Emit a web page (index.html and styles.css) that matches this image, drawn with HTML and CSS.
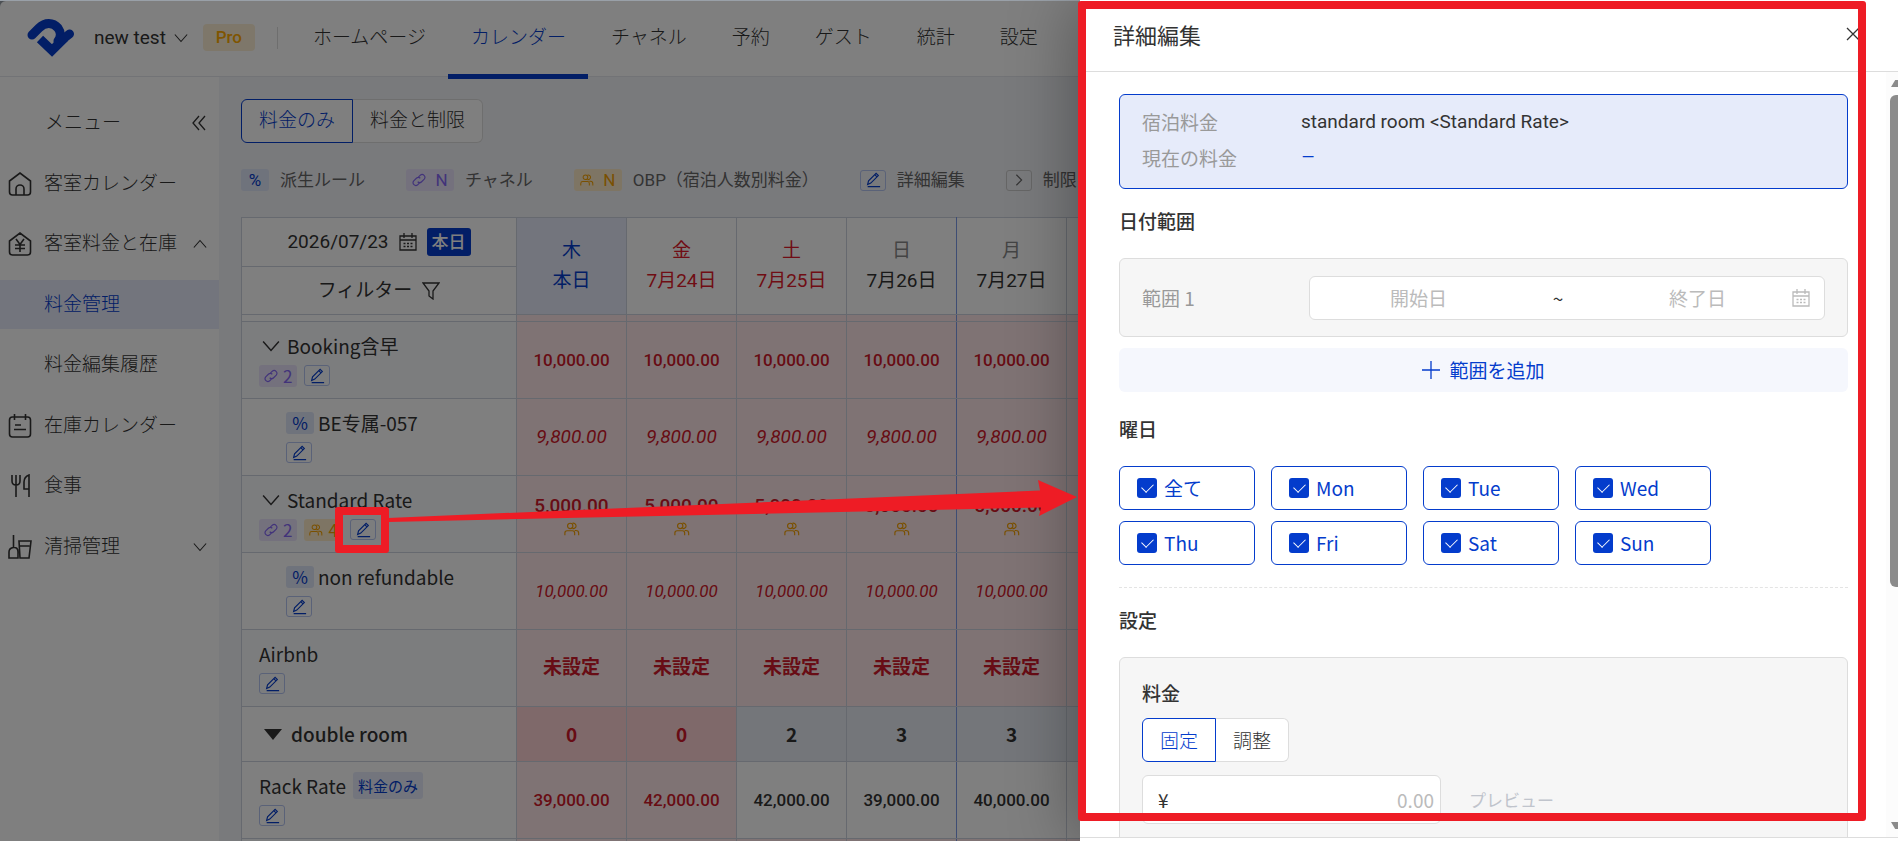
FILE: index.html
```html
<!DOCTYPE html>
<html lang="ja">
	<head>
		<meta charset="utf-8" />
		<title>料金管理</title>
		<link rel="stylesheet" href="styles.css">
	</head>
	<body>
		<svg class="sprite" aria-hidden="true">
			<symbol id="i-down" viewBox="0 0 16 16"><path d="M1 4l7 8 7-8"/></symbol>
			<symbol id="i-up" viewBox="0 0 16 16"><path d="M1 12l7-8 7 8"/></symbol>
			<symbol id="i-right" viewBox="0 0 16 16"><path d="M5 2l6 6-6 6"/></symbol>
			<symbol id="i-link" viewBox="0 0 16 16"><path d="M7 5l2.500-2.500a3.200 3.200 0 0 1 4.500 4.500L11 10a3.200 3.200 0 0 1-4.500 0M9 11l-2.500 2.500A3.200 3.200 0 0 1 2 9l3-3a3.200 3.200 0 0 1 4.500 0"/></symbol>
			<symbol id="i-people" viewBox="0 0 18 16"><circle cx="7" cy="4.500" r="3"/><path d="M9.500 1.700a3 3 0 1 1 0 5.600M1 15v-2.500Q1 10 3.500 10h6q2.500 0 2.500 2.500V15M12 9.700h1.500q3 0 3 3V15"/></symbol>
			<symbol id="i-edit" viewBox="0 0 18 18"><path d="M3 14l1-4L12.500 1.500l2.500 2.500L6.500 12.500zM11 3l2.500 2.500M3 16.500h14"/></symbol>
			<symbol id="i-calendar" viewBox="0 0 18 18"><path d="M1 3h16v14H1zM1 7h16M5 0v5M13 0v5M4.500 10.500h2M8 10.500h2M11.500 10.500h2M4.500 13.500h2M8 13.500h2M11.500 13.500h2"/></symbol>
			<symbol id="i-house" viewBox="0 0 24 24"><path d="M1.500 20V9L12 1l10.500 8v11q0 3-3 3h-15q-3 0-3-3zM8 23v-6a4 4 0 0 1 8 0v6"/></symbol>
			<symbol id="i-price" viewBox="0 0 24 24"><path d="M1.500 20V9L12 1l10.500 8v11q0 3-3 3h-15q-3 0-3-3zM8 7l4 5.500L16 7M12 12.500V20M7 13h10M7 16.500h10"/></symbol>
			<symbol id="i-stock" viewBox="0 0 24 24"><rect x="1.500" y="3" width="21" height="20" rx="3"/><path d="M6.500 0v6M17.500 0v6M7 11h6M6 15.500h12"/></symbol>
			<symbol id="i-meal" viewBox="0 0 24 24"><path d="M4 1v6q0 4 4 4t4-4V1M8 1v22M21 23V1q-5 2-5 7v7h5"/></symbol>
			<symbol id="i-clean" viewBox="0 0 24 24"><path d="M5.500 0v12M1 23V17q0-4 4.500-4.500T10 17v6zM11 6h12l-2 17h-9zM11.500 11h10"/></symbol>
		</svg>

		<div class="app">
			<header class="topbar">
				<svg class="logo" viewBox="0 0 47 38"><g fill="none" stroke="#043ccc" stroke-width="9"><path d="M5 16L12 9C18 3 26 3 31 9C34 13 34 18 31 22" stroke-linecap="round"/><path d="M13 20L25 31.500L38 18.500"/><path d="M36 20L42.500 15" stroke-linecap="round"/></g></svg>
				<button class="account">new test <svg class="icon icon14"><use href="#i-down"/></svg></button>
				<span class="plan">Pro</span>
				<span class="divider"></span>
				<nav class="nav">
					<a href="#">ホームページ</a>
					<a href="#" class="active">カレンダー</a>
					<a href="#">チャネル</a>
					<a href="#">予約</a>
					<a href="#">ゲスト</a>
					<a href="#">統計</a>
					<a href="#">設定</a>
				</nav>
			</header>

			<div class="main">
				<aside class="sidebar">
					<div class="menu_title"><span>メニュー</span><svg class="icon icon16" viewBox="0 0 16 16"><path d="M8 1L2 8l6 7M14 1L8 8l6 7"/></svg></div>
					<nav class="menu">
						<a href="#"><svg class="icon icon24"><use href="#i-house"/></svg><span>客室カレンダー</span></a>
						<a href="#"><svg class="icon icon24"><use href="#i-price"/></svg><span>客室料金と在庫</span><svg class="icon icon14 arrow"><use href="#i-up"/></svg></a>
						<a href="#" class="sub active"><span>料金管理</span></a>
						<a href="#" class="sub"><span>料金編集履歴</span></a>
						<a href="#"><svg class="icon icon24"><use href="#i-stock"/></svg><span>在庫カレンダー</span></a>
						<a href="#"><svg class="icon icon24"><use href="#i-meal"/></svg><span>食事</span></a>
						<a href="#"><svg class="icon icon24"><use href="#i-clean"/></svg><span>清掃管理</span><svg class="icon icon14 arrow"><use href="#i-down"/></svg></a>
					</nav>
				</aside>

				<main class="content">
					<div class="segment">
						<button class="selected">料金のみ</button><button>料金と制限</button>
					</div>

					<div class="legend">
						<div><span class="tag blue">%</span>派生ルール</div>
						<div><span class="tag violet wide"><svg class="icon icon14"><use href="#i-link"/></svg>N</span>チャネル</div>
						<div><span class="tag orange wide"><svg class="icon icon14"><use href="#i-people"/></svg>N</span>OBP（宿泊人数別料金）</div>
						<div><span class="edit"><svg class="icon icon16"><use href="#i-edit"/></svg></span>詳細編集</div>
						<div><span class="edit grey"><svg class="icon icon14"><use href="#i-right"/></svg></span>制限を編集</div>
					</div>

					<table class="rates">
						<colgroup><col class="c_name"><col span="6" class="c_day"></colgroup>
						<thead>
							<tr class="h_date">
								<th><div class="tools"><span>2026/07/23</span><svg class="icon icon18"><use href="#i-calendar"/></svg><button class="today_button">本日</button></div></th>
								<th rowspan="2" class="today">木<br>本日</th>
								<th rowspan="2" class="red">金<br>7月24日</th>
								<th rowspan="2" class="red">土<br>7月25日</th>
								<th rowspan="2" class="week_end"><span class="dow">日</span><br>7月26日</th>
								<th rowspan="2"><span class="dow">月</span><br>7月27日</th>
								<th rowspan="2"></th>
							</tr>
							<tr class="h_filter">
								<th><div class="tools"><span>フィルター</span><svg class="icon icon18" viewBox="0 0 18 18"><path d="M1 1h16l-6 8v8l-4-3V9z"/></svg></div></th>
							</tr>
						</thead>
						<tbody>
							<tr class="stub"><td></td><td></td><td></td><td></td><td class="week_end"></td><td></td><td></td></tr>
							<tr class="parent small">
								<td><div class="name"><div class="line"><svg class="icon icon18 toggle"><use href="#i-down"/></svg>Booking含早</div><div class="line"><span class="tag violet"><svg class="icon icon14"><use href="#i-link"/></svg>2</span><button class="edit" aria-label="詳細編集"><svg class="icon icon16"><use href="#i-edit"/></svg></button></div></div></td>
								<td>10,000.00</td><td>10,000.00</td><td>10,000.00</td><td class="week_end">10,000.00</td><td>10,000.00</td><td></td>
							</tr>
							<tr class="child">
								<td><div class="name"><div class="line"><span class="tag blue">%</span>BE专属-057</div><div class="line"><button class="edit" aria-label="詳細編集"><svg class="icon icon16"><use href="#i-edit"/></svg></button></div></div></td>
								<td>9,800.00</td><td>9,800.00</td><td>9,800.00</td><td class="week_end">9,800.00</td><td>9,800.00</td><td></td>
							</tr>
							<tr class="parent">
								<td><div class="name"><div class="line"><svg class="icon icon18 toggle"><use href="#i-down"/></svg>Standard Rate</div><div class="line"><span class="tag violet"><svg class="icon icon14"><use href="#i-link"/></svg>2</span><span class="tag orange"><svg class="icon icon14"><use href="#i-people"/></svg>4</span><button class="edit" aria-label="詳細編集"><svg class="icon icon16"><use href="#i-edit"/></svg></button></div></div></td>
								<td>5,000.00<svg class="icon icon16 obp"><use href="#i-people"/></svg></td>
								<td>5,000.00<svg class="icon icon16 obp"><use href="#i-people"/></svg></td>
								<td>5,000.00<svg class="icon icon16 obp"><use href="#i-people"/></svg></td>
								<td class="week_end">5,000.00<svg class="icon icon16 obp"><use href="#i-people"/></svg></td>
								<td>5,000.00<svg class="icon icon16 obp"><use href="#i-people"/></svg></td>
								<td></td>
							</tr>
							<tr class="child small">
								<td><div class="name"><div class="line"><span class="tag blue">%</span>non refundable</div><div class="line"><button class="edit" aria-label="詳細編集"><svg class="icon icon16"><use href="#i-edit"/></svg></button></div></div></td>
								<td>10,000.00</td><td>10,000.00</td><td>10,000.00</td><td class="week_end">10,000.00</td><td>10,000.00</td><td></td>
							</tr>
							<tr class="parent unset">
								<td><div class="name"><div class="line">Airbnb</div><div class="line"><button class="edit" aria-label="詳細編集"><svg class="icon icon16"><use href="#i-edit"/></svg></button></div></div></td>
								<td>未設定</td><td>未設定</td><td>未設定</td><td class="week_end">未設定</td><td>未設定</td><td></td>
							</tr>
							<tr class="room">
								<td><div class="line"><span class="triangle"></span>double room</div></td>
								<td class="none">0</td><td class="none">0</td><td>2</td><td class="week_end">3</td><td>3</td><td></td>
							</tr>
							<tr class="rack small">
								<td><div class="name"><div class="line">Rack Rate<span class="only">料金のみ</span></div><div class="line"><button class="edit" aria-label="詳細編集"><svg class="icon icon16"><use href="#i-edit"/></svg></button></div></div></td>
								<td class="out">39,000.00</td><td class="out">42,000.00</td><td>42,000.00</td><td class="week_end">39,000.00</td><td>40,000.00</td><td></td>
							</tr>
							<tr class="parent"><td></td><td></td><td></td><td></td><td class="week_end"></td><td></td><td></td></tr>
						</tbody>
					</table>
				</main>
			</div>
		</div>

		<div class="mask"></div>

		<section class="drawer">
			<header class="drawer_header">
				<h1>詳細編集</h1>
				<button class="close" aria-label="閉じる"><svg class="icon icon14" viewBox="0 0 14 14"><path d="M1 1l12 12M13 1L1 13"/></svg></button>
			</header>

			<div class="drawer_body">
				<form class="form">
					<dl class="summary">
						<dt>宿泊料金</dt><dd>standard room &lt;Standard Rate&gt;</dd>
						<dt>現在の料金</dt><dd class="current">–</dd>
					</dl>

					<h2>日付範囲</h2>
					<div class="range">
						<label for="date_from">範囲 1</label>
						<div class="dates">
							<input id="date_from" type="text" placeholder="開始日">
							<span>~</span>
							<input type="text" placeholder="終了日" aria-label="終了日">
							<svg class="icon icon18"><use href="#i-calendar"/></svg>
						</div>
					</div>
					<button type="button" class="add"><svg class="icon icon18" viewBox="0 0 18 18"><path d="M9 0v18M0 9h18"/></svg>範囲を追加</button>

					<h2>曜日</h2>
					<div class="days">
						<label><input type="checkbox" checked>全て</label>
						<label><input type="checkbox" checked>Mon</label>
						<label><input type="checkbox" checked>Tue</label>
						<label><input type="checkbox" checked>Wed</label>
						<label><input type="checkbox" checked>Thu</label>
						<label><input type="checkbox" checked>Fri</label>
						<label><input type="checkbox" checked>Sat</label>
						<label><input type="checkbox" checked>Sun</label>
					</div>

					<h2>設定</h2>
					<div class="settings">
						<h3>料金</h3>
						<div class="segment">
							<button type="button" class="selected">固定</button><button type="button">調整</button>
						</div>
						<div class="price_row">
							<div class="price"><label for="price">¥</label><input id="price" type="text" placeholder="0.00"></div>
							<span class="preview">プレビュー</span>
						</div>
					</div>
				</form>
				<div class="scrollbar"><span class="scroll_up"></span><span class="thumb"></span><span class="scroll_down"></span></div>
			</div>
			<footer class="drawer_footer"></footer>
			<div class="mark mark_drawer"></div>
		</section>

		<!-- red callout from the pencil button to the drawer -->
		<div class="mark mark_edit"></div>
		<svg class="mark_arrow" viewBox="0 0 690 48"><path d="M0 42L652 14.500 650 4 689 21 651 40 653 31.500 0 46z" /></svg>
	</body>
</html>
```

FILE: styles.css
```css
*
{
	box-sizing: border-box;
}

body
{
	margin: 0;
	height: 100vh;
	overflow: hidden;
	position: relative;
	background: #99a0a8;
	color: #333333;
	font-family: Roboto, "Noto Sans CJK JP", sans-serif;
	font-size: 19px;
	line-height: 30px;
}

a
{
	color: inherit;
	text-decoration: none;
}

button,
input
{
	font: inherit;
	color: inherit;
	border: none;
	background: none;
	margin: 0;
	padding: 0;
}

h1,
h2,
h3
{
	margin: 0;
	font-size: 19px;
	font-weight: 500;
}

/* icons */
.sprite
{
	position: absolute;
	width: 0;
	height: 0;
}

.icon
{
	flex: none;
	fill: none;
	stroke: currentColor;
	stroke-width: 1.3;
}

.icon14 { width: 14px; height: 14px; }
.icon16 { width: 16px; height: 16px; }
.icon18 { width: 18px; height: 18px; }
.icon24 { width: 24px; height: 24px; stroke-width: 1.6; }

/* top bar */
.app
{
	height: 100%;
	display: flex;
	flex-direction: column;
	padding-top: 1px;
}

.topbar
{
	flex: none;
	height: 76px;
	display: flex;
	align-items: center;
	padding-left: 27px;
	padding-bottom: 2px;
	background: #ffffff;
	border-bottom: 1px solid #e4e6ec;
	border-top-left-radius: 6px;
}

.logo
{
	width: 47px;
	height: 38px;
}

.account
{
	display: flex;
	align-items: center;
	gap: 8px;
	margin-left: 20px;
}

.plan
{
	margin-left: 15px;
	width: 52px;
	border-radius: 4px;
	background: #fdefd4;
	color: #ffaa00;
	font-size: 17px;
	font-weight: 500;
	line-height: 27px;
	text-align: center;
}

.divider
{
	margin: 0 12px 0 22px;
	width: 1px;
	height: 22px;
	background: #dddddd;
}

.nav
{
	display: flex;
	align-self: stretch;
	font-weight: 300;
}

.nav a
{
	position: relative;
	padding: 0 22px 0 23px;
	line-height: 74px;
}

.nav .active
{
	color: #043ccc;
}

.nav .active::after
{
	content: "";
	position: absolute;
	left: 0;
	right: 0;
	bottom: -5px;
	height: 5px;
	background: #043ccc;
}

/* sidebar */
.main
{
	flex: 1;
	min-height: 0;
	display: flex;
	background: #f3f4f9;
}

.sidebar
{
	flex: none;
	width: 219px;
	background: #ffffff;
	font-weight: 300;
}

.menu_title
{
	display: flex;
	justify-content: space-between;
	align-items: center;
	padding: 31px 12px 21px 45px;
}

.menu
{
	display: flex;
	flex-direction: column;
	justify-content: space-between;
	height: 412px;
}

.menu a
{
	display: flex;
	align-items: center;
	gap: 12px;
	height: 49px;
	padding: 0 12px 0 8px;
}

.menu .sub
{
	padding-left: 44px;
}

.menu .active
{
	background: #e6ebfa;
	color: #043ccc;
}

.menu .arrow
{
	margin-left: auto;
}

/* calendar */
.content
{
	flex: 1;
	min-width: 0;
	padding: 22px 0 0 22px;
	overflow: hidden;
}

.segment
{
	display: flex;
}

.segment button
{
	height: 44px;
	padding: 0 17px;
	border: 1px solid #dddddd;
	border-left: none;
	border-radius: 0 6px 6px 0;
	background: #ffffff;
	font-weight: 300;
}

.segment .selected
{
	border: 1px solid #043ccc;
	border-radius: 6px 0 0 6px;
	color: #043ccc;
}

.legend
{
	display: flex;
	gap: 41px;
	margin: 22px 0;
	color: #666666;
	font-size: 17px;
	white-space: nowrap;
}

.legend div
{
	display: flex;
	align-items: center;
	gap: 11px;
}

.tag
{
	display: flex;
	align-items: center;
	justify-content: center;
	gap: 5px;
	min-width: 28px;
	height: 22px;
	padding: 0 5px;
	border-radius: 3px;
	font-size: 17px;
	font-weight: 400;
}

.tag.wide
{
	gap: 9px;
	width: 48px;
}

.tag.blue { background: #dfe6f9; color: #043ccc; }
.tag.violet { background: #e8e3fa; color: #8466f5; }
.tag.orange { background: #fdebc8; color: #f5a000; }

.edit
{
	display: flex;
	align-items: center;
	justify-content: center;
	width: 26px;
	height: 21px;
	border: 1px solid #b4c4f0;
	border-radius: 3px;
	color: #043ccc;
}

.edit.grey
{
	border-color: #cccccc;
	color: #666666;
}

.rates
{
	width: 936px;
	table-layout: fixed;
	border-collapse: collapse;
	background: #ffffff;
}

.c_name { width: 275px; }
.c_day { width: 110px; }

.rates th,
.rates td
{
	padding: 0;
	border: 1px solid #cdd3df;
	text-align: center;
}

.rates th
{
	font-weight: 400;
}

.rates th.today
{
	background: #e6ebfa;
	color: #043ccc;
}

.rates th.red
{
	color: #e01a2b;
}

.dow
{
	color: #888888;
}

.rates .week_end
{
	border-right-color: #7d9be8;
}

.h_date { height: 49px; }
.h_filter { height: 48px; }
.stub { height: 7px; }
.parent, .child, .rack { height: 77px; }
.room { height: 55px; }

.tools
{
	display: flex;
	align-items: center;
	justify-content: center;
	gap: 10px;
}

.today_button
{
	width: 44px;
	border-radius: 3px;
	background: #043ccc;
	color: #ffffff;
	font-size: 17px;
	font-weight: 500;
	line-height: 28px;
}

.rates tbody td
{
	background: #fee7e9;
	color: #d0182a;
}

.parent td { font-weight: 500; }
.unset td { font-weight: 700; }
.child td { font-style: italic; }
.small td { font-size: 17px; }

.rates tbody .name,
.rates tbody .line
{
	font-family: "Noto Sans CJK JP", sans-serif;
	font-size: 19px;
	font-style: normal;
	font-weight: 400;
	color: #333333;
}

.rates tbody td:first-child
{
	background: #ffffff;
	padding-left: 17px;
}

.rates .parent td:first-child
{
	background: #f9fafd;
}

.name
{
	display: flex;
	flex-direction: column;
	gap: 4px;
	padding-top: 1px;
}

.child .name
{
	padding-left: 27px;
}

.line
{
	display: flex;
	align-items: center;
	gap: 7px;
	height: 26px;
}

.child .line
{
	gap: 4px;
}

.toggle
{
	margin-left: 3px;
}

.obp
{
	display: block;
	margin: 0 auto;
	color: #f5a000;
}

.rates .room td
{
	background: #e9edf5;
	color: #333333;
	font-family: "Noto Sans CJK JP", sans-serif;
	font-weight: 700;
}

.rates .room .none
{
	background: #fed2d4;
	color: #d0182a;
}

.rates .room .line
{
	gap: 9px;
	padding-left: 5px;
	font-weight: 500;
}

.triangle
{
	border: 9px solid transparent;
	border-top: 11px solid #333333;
	border-bottom: none;
}

.rates .rack td
{
	background: #ffffff;
	color: #333333;
	font-weight: 500;
}

.rates .rack .out
{
	background: #fee7e9;
	color: #d0182a;
}

.only
{
	padding: 0 5px;
	border-radius: 3px;
	background: #e6ebfa;
	color: #043ccc;
	font-size: 15px;
	font-weight: 400;
	line-height: 27px;
}

/* drawer */
.mask
{
	position: absolute;
	inset: 1px 0 0;
	background: rgba(0, 0, 0, 0.5);
}

.drawer
{
	position: absolute;
	top: 0;
	right: 0;
	bottom: 0;
	width: 818px;
	display: flex;
	flex-direction: column;
	background: #ffffff;
	box-shadow: -8px 0 60px rgba(0, 0, 0, 0.3);
	font-family: "Noto Sans CJK JP", sans-serif;
}

.drawer_header
{
	flex: none;
	display: flex;
	align-items: center;
	justify-content: space-between;
	height: 72px;
	padding: 0 38px 4px 33px;
	border-bottom: 1px solid #dddddd;
}

.drawer_header h1
{
	font-size: 22px;
	font-weight: 400;
}

.close
{
	display: flex;
}

.drawer_body
{
	flex: 1;
	min-height: 0;
	display: flex;
	overflow: hidden;
}

.form
{
	flex: 1;
	min-width: 0;
	padding: 22px 38px 0 39px;
}

.form h2
{
	padding: 17px 0 22px;
}

.summary
{
	display: grid;
	grid-template-columns: 159px 1fr;
	row-gap: 6px;
	height: 95px;
	margin: 0;
	padding: 12px 22px;
	border: 1px solid #043ccc;
	border-radius: 6px;
	background: #e6ebfa;
	align-content: start;
}

.summary dt
{
	color: #999999;
}

.summary dd
{
	margin: 0;
	font-family: Roboto, sans-serif;
}

.summary .current
{
	color: #043ccc;
	font-size: 22px;
	font-weight: 300;
}

.range
{
	display: flex;
	align-items: center;
	height: 79px;
	padding: 0 22px;
	border: 1px solid #dddddd;
	border-radius: 6px;
	background: #f6f6f6;
}

.range label
{
	flex: none;
	width: 167px;
	color: #999999;
}

.dates
{
	flex: 1;
	min-width: 0;
	display: flex;
	align-items: center;
	height: 44px;
	padding: 0 14px;
	border: 1px solid #dddddd;
	border-radius: 6px;
	background: #ffffff;
	color: #bbbbbb;
}

.dates input
{
	flex: 1;
	min-width: 0;
	text-align: center;
}

.dates span
{
	width: 90px;
	color: #333333;
	text-align: center;
}

::placeholder
{
	color: #bbbbbb;
	opacity: 1;
}

.add
{
	display: flex;
	align-items: center;
	justify-content: center;
	gap: 9px;
	width: 100%;
	height: 44px;
	margin: 11px 0 5px;
	border-radius: 6px;
	background: #f5f7fd;
	color: #043ccc;
}

.days
{
	display: grid;
	grid-template-columns: repeat(4, 136px);
	gap: 11px 16px;
	padding-bottom: 22px;
	border-bottom: 1px dashed #e4e4e4;
}

.days label
{
	display: flex;
	align-items: center;
	gap: 7px;
	height: 44px;
	padding-left: 17px;
	border: 1px solid #043ccc;
	border-radius: 6px;
	color: #043ccc;
}

.days input
{
	appearance: none;
	display: flex;
	align-items: center;
	justify-content: center;
	width: 20px;
	height: 20px;
	border-radius: 3px;
	background: #043ccc;
}

.days input:checked::after
{
	content: "";
	width: 6px;
	height: 10px;
	margin-bottom: 3px;
	border: solid #ffffff;
	border-width: 0 1px 1px 0;
	transform: rotate(45deg);
}

.settings
{
	height: 240px;
	padding: 20px 22px;
	border: 1px solid #dddddd;
	border-radius: 6px;
	background: #f6f6f6;
}

.settings h3
{
	padding-bottom: 10px;
}

.price_row
{
	display: flex;
	align-items: center;
	gap: 28px;
	margin-top: 13px;
}

.price
{
	display: flex;
	align-items: center;
	width: 299px;
	height: 49px;
	padding: 0 6px 0 15px;
	border: 1px solid #dddddd;
	border-radius: 6px;
	background: #ffffff;
}

.price input
{
	flex: 1;
	min-width: 0;
	text-align: right;
}

.preview
{
	color: #c0c4cc;
	font-size: 17px;
}

.scrollbar
{
	flex: none;
	display: flex;
	flex-direction: column;
	align-items: flex-end;
	width: 12px;
	padding: 8px 0;
	background: #fcfcfc;
}

.thumb
{
	width: 8px;
	height: 492px;
	margin: 8px 0 auto;
	border-top-left-radius: 6px;
	border-bottom-left-radius: 6px;
	background: #8b8b8b;
}

.scroll_up,
.scroll_down
{
	width: 7px;
	height: 7px;
	background: #8b8b8b;
	clip-path: polygon(0 100%, 60% 0, 100% 0, 100% 100%);
}

.scroll_down
{
	clip-path: polygon(0 0, 100% 0, 100% 100%, 60% 100%);
}

.drawer_footer
{
	flex: none;
	height: 4px;
	border-top: 1px solid #dddddd;
	background: #ffffff;
}

/* callout */
.mark
{
	position: absolute;
	border: 8px solid #ee1c25;
	border-radius: 3px;
}

.mark_drawer
{
	top: 1px;
	right: 32px;
	bottom: 20px;
	left: -2px;
}

.mark_edit
{
	left: 335px;
	top: 507px;
	width: 54px;
	height: 46px;
}

.mark_arrow
{
	position: absolute;
	left: 388px;
	top: 476px;
	width: 690px;
	height: 48px;
	fill: #ee1c25;
}
```
